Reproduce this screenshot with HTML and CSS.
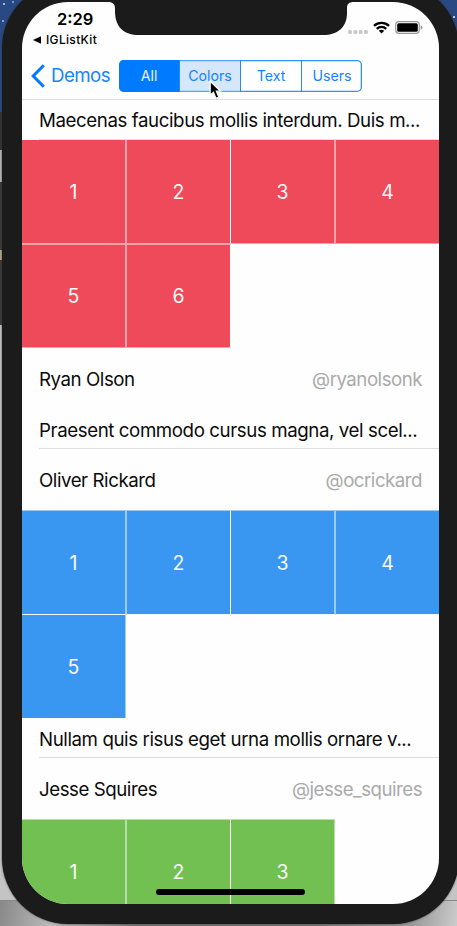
FILE: index.html
```html
<!DOCTYPE html>
<html lang="en">
<head>
<meta charset="utf-8">
<title>IGListKit Demos</title>
<link rel="stylesheet" href="styles.css">
</head>
<body>
<div class="desktop">
<div class="phone">
<div class="screen">
  <svg class="notch" width="417" height="35" viewBox="22 2 417 35"><path fill="#1b1b1b" d="M108 1V2C113 2 115 4 115 9V11C115 27 124 35 139 35H323C338 35 347 27 347 13V8C347 4 349 2 354 2V1Z"/></svg>
  <header>
    <div class="status">
      <div class="clock"><div class="time"><span>2:29</span></div>
      <div class="back-app"><svg width="9" height="8" viewBox="0 0 9 8"><path d="M0 4L8 .2V7.8Z"/></svg><span>IGListKit</span></div></div>
      <div class="signals">
        <svg width="20" height="5" viewBox="0 0 20 5" fill="#c9c9c9"><rect x="0" y="1" width="4" height="4" rx="1.5"/><rect x="5.3" y="1" width="4" height="4" rx="1.5"/><rect x="10.6" y="1" width="4" height="4" rx="1.5"/><rect x="15.9" y="1" width="4" height="4" rx="1.5"/></svg>
        <svg class="wifi" width="17" height="13" viewBox="0 0 17 13" fill="none" stroke="#000" stroke-width="2.3"><path d="M1 4.8C5.2.8 11.8.8 16 4.8"/><path d="M3.8 7.9C6.4 5.3 10.6 5.3 13.2 7.9"/><path d="M5.8 9.8C7.3 8.4 9.7 8.4 11.2 9.8L8.5 12.4Z" fill="#000" stroke="none"/></svg>
        <svg class="battery" width="28" height="13" viewBox="0 0 28 13"><rect x=".7" y=".7" width="23.6" height="11.6" rx="3.3" fill="none" stroke="#999" stroke-width="1.2"/><rect x="2.2" y="2.2" width="20.6" height="8.6" rx="1.5"/><path d="M25.7 4.2Q27.4 5 27.4 6.5T25.7 8.8Z" fill="#999"/></svg>
      </div>
    </div>
    <nav>
      <svg width="15" height="24" viewBox="0 0 15 24" fill="none" stroke="#007aff" stroke-width="3"><path d="M12.8 1.2L2.2 12L12.8 22.8"/></svg>
      <span class="back"><span>Demos</span></span>
      <div class="segments"><div class="selected"><span>All</span></div><div class="pressed"><span>Colors</span></div><div><span>Text</span></div><div><span>Users</span></div></div>
    </nav>
  </header>
  <main>
    <div class="row text first"><span>Maecenas faucibus mollis interdum. Duis m...</span></div>
    <section class="grid red"><div>1</div><div>2</div><div>3</div><div>4</div><div>5</div><div>6</div></section>
    <div class="row user ryan"><span>Ryan Olson</span><span class="handle">@ryanolsonk</span></div>
    <div class="row text second"><span>Praesent commodo cursus magna, vel scel...</span></div>
    <div class="row user oliver"><span>Oliver Rickard</span><span class="handle">@ocrickard</span></div>
    <section class="grid blue"><div>1</div><div>2</div><div>3</div><div>4</div><div>5</div></section>
    <div class="row text third"><span>Nullam quis risus eget urna mollis ornare v...</span></div>
    <div class="row user jesse"><span>Jesse Squires</span><span class="handle">@jesse_squires</span></div>
    <section class="grid green"><div>1</div><div>2</div><div>3</div></section>
  </main>
  <div class="home"></div>
</div>
</div>
<svg class="pointer" width="15" height="20" viewBox="0 0 15 20"><path d="M1.2 1.2V15.2L4.4 12.3L7 18.2L9.8 17L7.3 11.2H11.6Z" fill="#000" stroke="#fff" stroke-width="1.2"/></svg>
</div>
</body>
</html>
```
FILE: styles.css
```css
* { box-sizing: border-box; }
body { margin: 0; font-family: Inter, "Liberation Sans", sans-serif; color: #0b0b0b; }
.desktop {
  position: relative;
  width: 457px;
  height: 926px;
  overflow: hidden;
  display: flow-root;
  background:
    radial-gradient(circle at 4px 4px, #9db4dc 0 .7px, transparent 1.3px),
    radial-gradient(circle at 3px 21px, #9db4dc 0 .6px, transparent 1.2px),
    radial-gradient(circle at 13px 2px, #8aa3d0 0 .6px, transparent 1.2px),
    radial-gradient(circle at 454px 17px, #b9c8e5 0 .7px, transparent 1.3px),
    linear-gradient(100deg, #888 0, #bbb 12%, #777 30%, #777 70%, #989898 90%, #ccc) 0 901px / 100% 25px no-repeat,
    linear-gradient(#284983 0 112px, #343434 112px 150px, #b8b8b8 150px 182px, #3a3a3a 182px 250px, #b4a889 250px 260px, #3a3a3a 260px 325px, #c4c4c4 325px 900px, #888 900px);
}
.phone {
  width: 457px;
  height: 942px;
  margin: -18px 0 0 2px;
  padding: 20px;
  border-radius: 66px;
  background: #1b1b1b;
  box-shadow: 0 0 2px #333;
}
.screen {
  position: relative;
  width: 417px;
  height: 902px;
  overflow: hidden;
  border-radius: 46px;
  background: #fefefe;
}
.notch { position: absolute; top: 0; left: 0; }
header { height: 98px; border-bottom: 1px solid #dedede; }
.status { height: 50px; display: flex; justify-content: space-between; }
.clock { padding: 7px 0 0 11px; color: #000; }
.time { padding-left: 24px; font-size: 16.5px; line-height: 21px; font-weight: 600; }
.back-app { display: flex; align-items: center; gap: 4px; font-size: 12px; letter-spacing: .33px; line-height: 20px; font-weight: 500; }
.signals { display: flex; align-items: flex-start; padding: 19px 16px 0 0; }
.signals svg:first-child { margin-top: 8px; margin-right: 5px; }
.wifi { margin-right: 5px; }
nav { height: 47px; display: flex; align-items: center; padding-left: 9px; color: #1684fb; }
.back { width: 73px; padding-left: 5px; font-size: 18.7px; letter-spacing: -.55px; white-space: nowrap; }
.segments {
  display: grid;
  grid-template-columns: 61px 61px 61px 60px;
  width: 243px;
  height: 32px;
  border-radius: 5px;
  overflow: hidden;
  box-shadow: inset 0 0 0 1.3px #3194fc;
  font-size: 14.2px;
}
.segments div { display: flex; align-items: center; justify-content: center; border-right: 1px solid #218bfb; }
.segments div:last-child { border: 0; }
.segments .selected { background: #007aff; color: #e7f2ff; }
.segments .pressed { background: #d4e7fc; box-shadow: inset 0 1.3px #54a6fa, inset 0 -1.3px #54a6fa; }
.row { display: flex; align-items: center; justify-content: space-between; padding: 0 17px; font-size: 18.7px; letter-spacing: -.41px; white-space: nowrap; }
.row span { flex: none; }
.text { padding-right: 0; background: linear-gradient(#dedede, #dedede) 17px 100% / 400px 1px no-repeat; }
.first { height: 40px; padding-top: 1px; }
.second { height: 40px; padding-top: 2px; }
.third { height: 40px; padding-top: 2px; }
.ryan { height: 61px; padding-top: 1px; }
.oliver { height: 61px; padding-top: 1px; }
.jesse { height: 61px; padding-top: 1px; }
.user { letter-spacing: -.45px; }
.handle { color: #aaa; letter-spacing: -.5px; }
.grid {
  display: grid;
  grid-template-columns: 105px 104px 105px 103px;
  color: #f8f8f8;
  font-size: 19.5px;
}
.grid div { display: flex; align-items: center; justify-content: center; background: var(--fill); border: 0 solid var(--edge); }
.grid div:nth-child(4n+1), .grid div:nth-child(4n+3) { border-right-width: 2px; }
.grid div:nth-child(4n+2) { border-right: 1px solid #fefefe; }
.red { --fill: #ee4a5a; --edge: #f5a2aa; grid-template-rows: 105px 103px; }
.red div:nth-child(-n+4) { border-bottom-width: 2px; }
.red div:nth-child(n+3):nth-child(-n+4) { border-bottom-width: 1px; margin-bottom: 1px; }
.red div:nth-child(n+5) { border-bottom-width: 1px; }
.blue { --fill: #3997f1; --edge: #9ccbf8; grid-template-rows: 105px 103px; }
.blue div:nth-child(-n+4) { border-top-width: 1px; border-bottom: 1px solid #f2f8fe; }
.green { --fill: #72c052; --edge: #b8dfa8; grid-template-rows: 105px; }
.green div { border-top-width: 1px; }
.grid.blue div:last-child, .grid.green div:last-child { border-right-width: 1px; margin-right: 1px; }
.home { position: absolute; left: 134px; bottom: 9px; width: 149px; height: 6px; border-radius: 3px; background: #000; }
.pointer { position: absolute; left: 209px; top: 80px; }
```
